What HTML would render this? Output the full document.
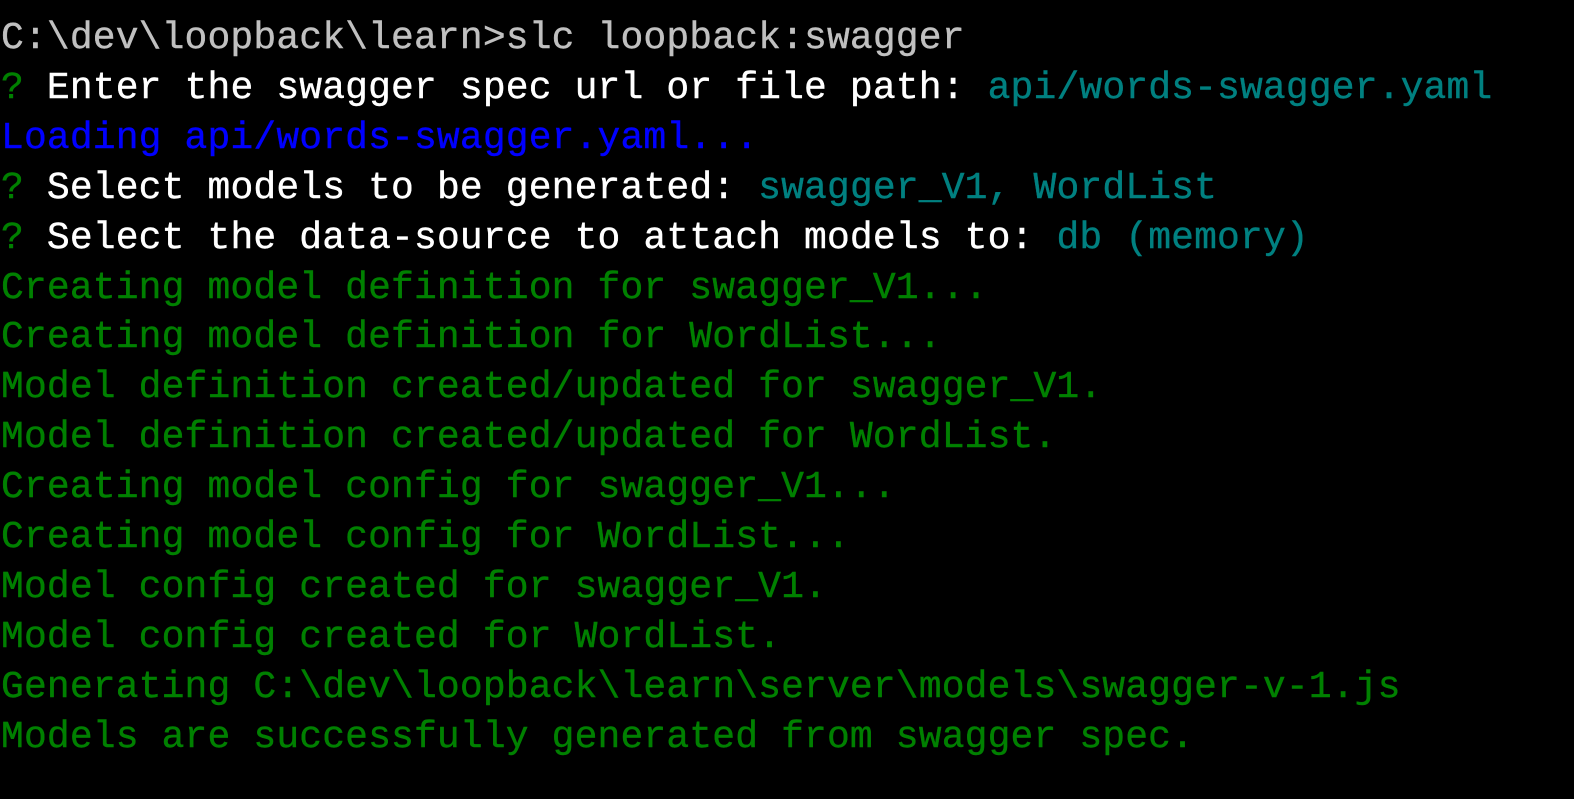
<!DOCTYPE html>
<html><head><meta charset="utf-8"><style>
html,body{margin:0;padding:0;background:#000;width:1574px;height:799px;overflow:hidden}
pre{margin:0;padding:14px 0 0 1px;font-family:"Liberation Mono",monospace;font-size:38px;letter-spacing:0.14px;line-height:49.9px;color:#c0c0c0;-webkit-text-stroke:0.4px currentColor}
.g{color:#008000}.w{color:#fff}.b{color:#0000ff}.t{color:#008080}
</style></head><body><pre>C:\dev\loopback\learn&gt;slc loopback:swagger
<span class="g">?</span> <span class="w">Enter the swagger spec url or file path:</span> <span class="t">api/words-swagger.yaml</span>
<span class="b">Loading api/words-swagger.yaml...</span>
<span class="g">?</span> <span class="w">Select models to be generated:</span> <span class="t">swagger_V1, WordList</span>
<span class="g">?</span> <span class="w">Select the data-source to attach models to:</span> <span class="t">db (memory)</span>
<span class="g">Creating model definition for swagger_V1...
Creating model definition for WordList...
Model definition created/updated for swagger_V1.
Model definition created/updated for WordList.
Creating model config for swagger_V1...
Creating model config for WordList...
Model config created for swagger_V1.
Model config created for WordList.
Generating C:\dev\loopback\learn\server\models\swagger-v-1.js
Models are successfully generated from swagger spec.</span>
</pre></body></html>
